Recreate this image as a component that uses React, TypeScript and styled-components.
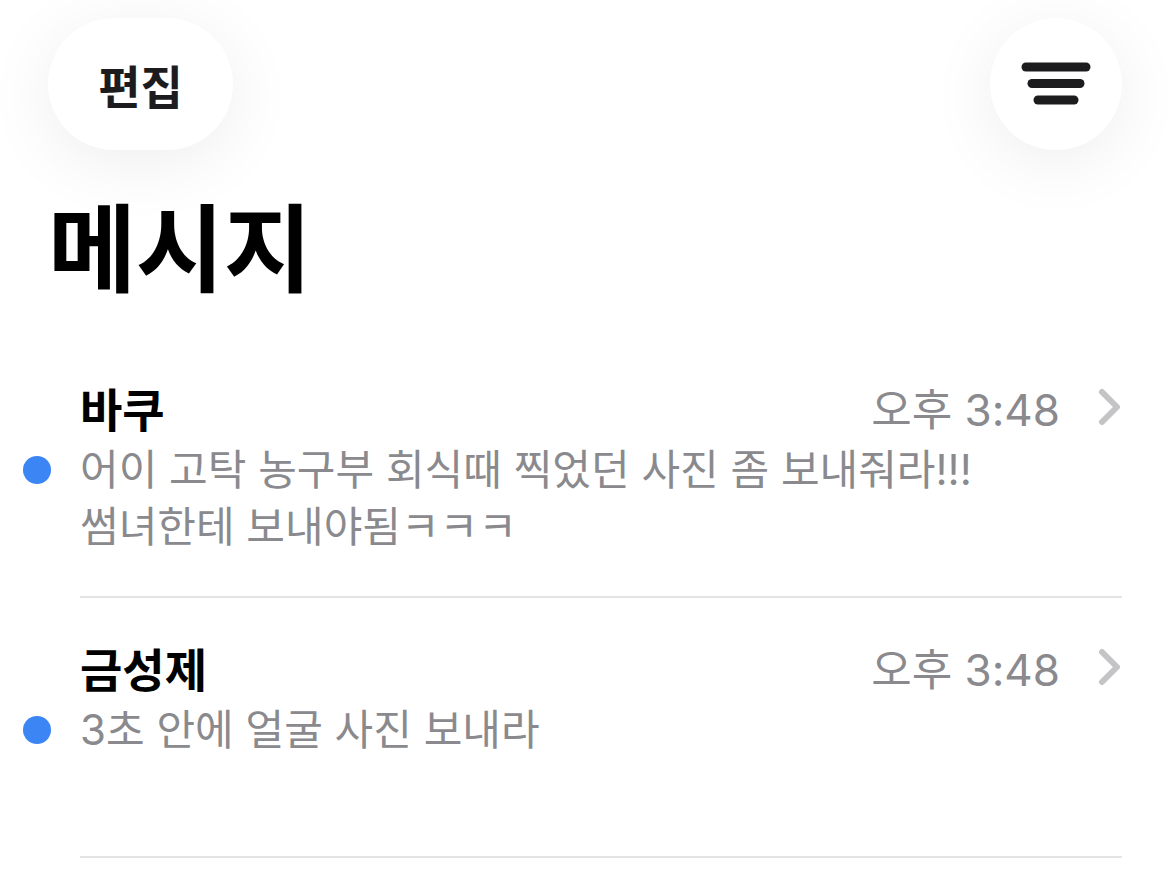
import React from "react";
import styled, { createGlobalStyle } from "styled-components";

const GlobalStyle = createGlobalStyle`
  html, body {
    margin: 0;
    padding: 0;
    background: #ffffff;
  }
  body {
    font-family: "Inter", "Noto Sans CJK KR", "Noto Sans", sans-serif;
    -webkit-font-smoothing: antialiased;
  }
`;

const Screen = styled.div`
  width: 1169px;
  height: 869px;
  overflow: hidden;
  background: #ffffff;
  display: flex;
  flex-direction: column;
`;

const TopBar = styled.header`
  display: flex;
  justify-content: space-between;
  align-items: center;
  padding: 18px 47px 0 48px;
`;

const RoundButton = styled.button<{ $wide?: boolean }>`
  height: 132px;
  width: ${(p) => (p.$wide ? "185px" : "132px")};
  border-radius: 66px;
  border: none;
  background: #ffffff;
  box-shadow: 0 12px 70px rgba(0, 0, 0, 0.07);
  display: flex;
  align-items: center;
  justify-content: center;
  padding: 0;
  font-family: "Inter", "Noto Sans CJK KR", sans-serif;
  font-size: 46px;
  font-weight: 700;
  color: #1c1c1e;
`;

const Title = styled.h1`
  margin: 40px 0 30px 48px;
  font-size: 96px;
  line-height: 118px;
  font-weight: 700;
  color: #000000;
  letter-spacing: -0.5px;
`;

const List = styled.ul`
  list-style: none;
  margin: 0;
  padding: 0 47px 0 0;
`;

const HEADER_H = 56;
const GAP = 6;
const LINE_H = 57;
const PAD = 41;
const DOT = 28;

const Row = styled.li`
  display: flex;
`;

const Gutter = styled.div`
  width: 80px;
  flex: none;
  box-sizing: border-box;
  padding: ${PAD + HEADER_H + GAP + (LINE_H - DOT) / 2}px 0 0 23px;
`;

const Dot = styled.span`
  display: block;
  width: ${DOT}px;
  height: ${DOT}px;
  border-radius: 50%;
  background: #3b85f5;
`;

const Body = styled.div`
  flex: 1;
  min-width: 0;
  padding: ${PAD}px 0 ${PAD}px;
  border-bottom: 2px solid #e4e4e6;
`;

const Header = styled.div`
  height: ${HEADER_H}px;
  display: flex;
  align-items: center;
  margin-bottom: ${GAP}px;
`;

const Name = styled.span`
  flex: 1;
  font-size: 46px;
  font-weight: 700;
  color: #000000;
`;

const Time = styled.span`
  font-size: 44px;
  font-weight: 400;
  color: #8a8a8e;
  margin-right: 38px;
`;

const Preview = styled.p`
  margin: 0;
  font-size: 42px;
  line-height: ${LINE_H}px;
  min-height: ${LINE_H * 2}px;
  color: #8a8a8e;
  white-space: nowrap;
`;

const Chevron = () => (
  <svg width="24" height="38" viewBox="0 0 24 38" fill="none">
    <path
      d="M4 4 L19 19 L4 34"
      stroke="#c4c4c7"
      strokeWidth="6"
      strokeLinecap="round"
      strokeLinejoin="round"
    />
  </svg>
);

const FilterIcon = () => (
  <svg width="70" height="44" viewBox="0 0 70 44" fill="none">
    <g stroke="#1c1c1e" strokeWidth="9" strokeLinecap="round">
      <line x1="5" y1="5" x2="65" y2="5" />
      <line x1="11" y1="21.5" x2="59" y2="21.5" />
      <line x1="17" y1="38" x2="53" y2="38" />
    </g>
  </svg>
);

type Message = {
  name: string;
  time: string;
  text: string[];
  unread: boolean;
};

const messages: Message[] = [
  {
    name: "바쿠",
    time: "오후 3:48",
    text: ["어이 고탁 농구부 회식때 찍었던 사진 좀 보내줘라!!!", "썸녀한테 보내야됨ㅋㅋㅋ"],
    unread: true,
  },
  {
    name: "금성제",
    time: "오후 3:48",
    text: ["3초 안에 얼굴 사진 보내라"],
    unread: true,
  },
];

export default function App() {
  return (
    <Screen>
      <GlobalStyle />
      <TopBar>
        <RoundButton $wide>편집</RoundButton>
        <RoundButton aria-label="필터">
          <FilterIcon />
        </RoundButton>
      </TopBar>
      <Title>메시지</Title>
      <List>
        {messages.map((m) => (
          <Row key={m.name}>
            <Gutter>{m.unread && <Dot />}</Gutter>
            <Body>
              <Header>
                <Name>{m.name}</Name>
                <Time>{m.time}</Time>
                <Chevron />
              </Header>
              <Preview>
                {m.text.map((line, i) => (
                  <React.Fragment key={i}>
                    {i > 0 && <br />}
                    {line}
                  </React.Fragment>
                ))}
              </Preview>
            </Body>
          </Row>
        ))}
      </List>
    </Screen>
  );
}
